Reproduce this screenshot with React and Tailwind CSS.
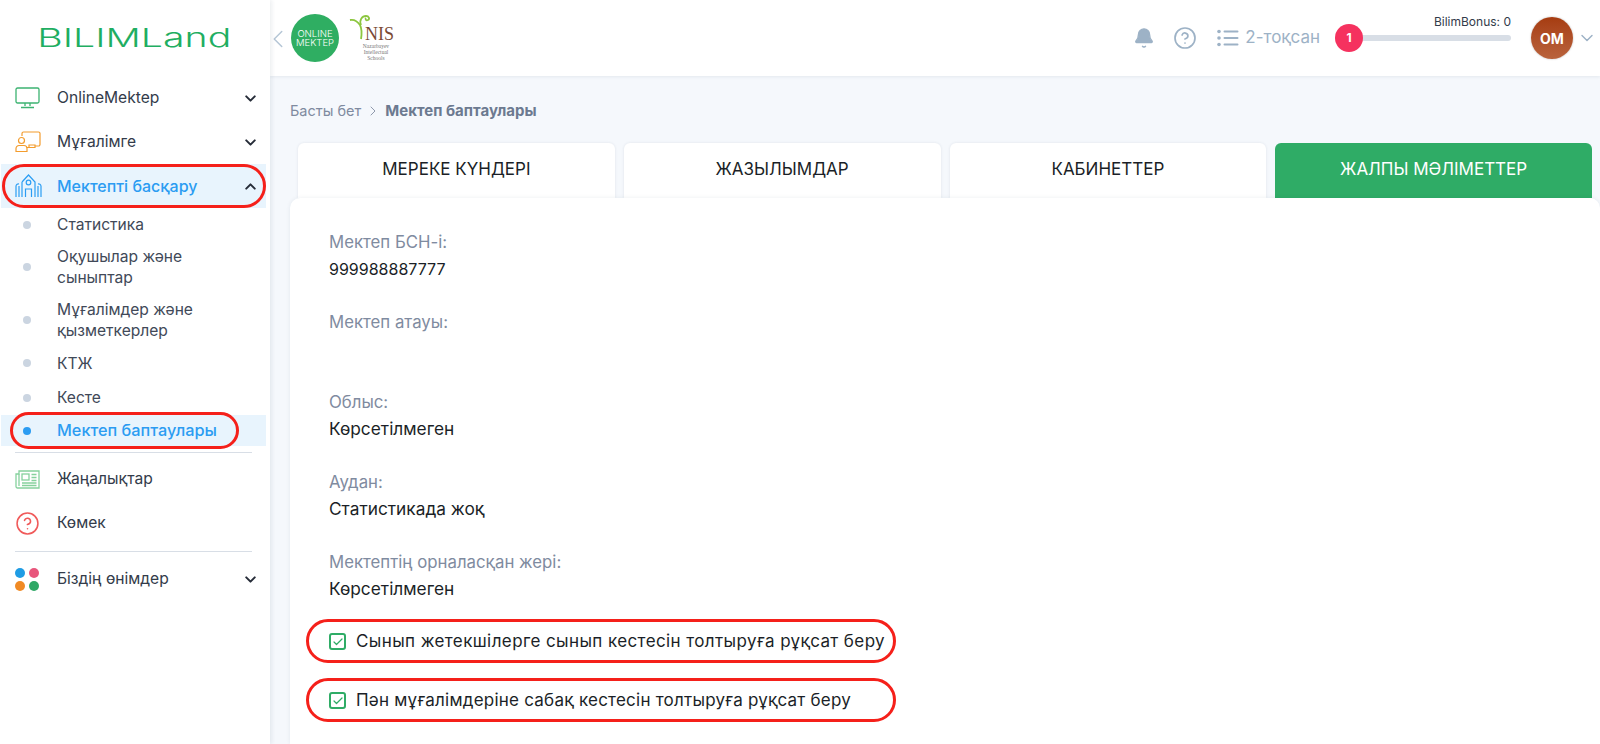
import React from "react";
import { ChevronDown, ChevronUp, ChevronLeft, ChevronRight, Bell, CircleHelp, Check } from "lucide-react";

const FONT = "font-['Inter','Liberation_Sans',Arial,sans-serif]";

function MonitorIcon() {
  return (
    <svg width="25" height="22" viewBox="0 0 25 22" fill="none" stroke="#3cb371" strokeWidth="1.300">
      <rect x="1" y="1" width="23" height="15" rx="1.500" />
      <path d="M10 16v3M15 16v3M6 20.500h13" />
    </svg>
  );
}

function TeacherIcon() {
  return (
    <svg width="26" height="22" viewBox="0 0 26 22" fill="none" stroke="#f39c2d" strokeWidth="1.200">
      <path d="M7 5V2.500A1.500 1.500 0 0 1 8.500 1h15A1.500 1.500 0 0 1 25 2.500v11a1.500 1.500 0 0 1-1.500 1.500H20" />
      <circle cx="6.500" cy="9.500" r="3" />
      <path d="M1 20.500v-3a3 3 0 0 1 3-3h5a3 3 0 0 1 3 3v3zM12 16.500h8V14h-6v2" />
    </svg>
  );
}

function SchoolIcon() {
  return (
    <svg width="27" height="24" viewBox="0 0 27 24" fill="none" stroke="#2a9df4" strokeWidth="1.200">
      <path d="M7 8l6.500-7L20 8v15M7 8v15M10.500 23v-8h6v8" />
      <circle cx="13.500" cy="8.500" r="2.300" />
      <path d="M1 23V12a2.500 2.500 0 0 1 3-2M4 23V12M26 23V12a2.500 2.500 0 0 0-3-2M23 23V12" />
    </svg>
  );
}

function NewsIcon() {
  return (
    <svg width="25" height="19" viewBox="0 0 25 19" fill="none" stroke="#86d19d" strokeWidth="1.300">
      <path d="M4 1h20v17H2.500A1.500 1.500 0 0 1 1 16.500V4h3z" />
      <path d="M4 4v12" />
      <rect x="7" y="4" width="7" height="6" />
      <path d="M16.500 4.500h5M16.500 7.500h5M16.500 10.500h5M7 13h14.500M7 15.500h14.500" />
    </svg>
  );
}

function ProductsIcon() {
  return (
    <div className="grid grid-cols-2 gap-x-[3px] gap-y-[3px] w-[24px]">
      <span className="w-[10px] h-[10px] rounded-full bg-[#1f9ce4]" />
      <span className="w-[10px] h-[10px] rounded-full bg-[#e8567c]" />
      <span className="w-[10px] h-[10px] rounded-full bg-[#f08a24]" />
      <span className="w-[10px] h-[10px] rounded-full bg-[#2fa866]" />
    </div>
  );
}

function QuarterIcon() {
  return (
    <svg width="22" height="18" viewBox="0 0 22 18" fill="#9db2c6">
      <circle cx="2" cy="2.500" r="1.800" />
      <circle cx="2" cy="9" r="1.800" />
      <circle cx="2" cy="15.500" r="1.800" />
      <rect x="6.500" y="1.500" width="15" height="2" rx="1" />
      <rect x="6.500" y="8" width="15" height="2" rx="1" />
      <rect x="6.500" y="14.500" width="15" height="2" rx="1" />
    </svg>
  );
}

function MenuItem({ icon, label, arrow, active }) {
  return (
    <div className={`flex items-center h-[44px] pl-[14px] pr-[7px] ${active ? "bg-[#e8f4fd] text-[#2b9cf2]" : "text-[#333b4a]"}`}>
      <div className="w-[42px] flex items-center">{icon}</div>
      <span className={`flex-1 ${active ? "text-[16px] font-medium" : "text-[15.600px]"}`}>{label}</span>
      {arrow === "down" && <ChevronDown size={17} strokeWidth={2.800} className="text-[#262c38]" />}
      {arrow === "up" && <ChevronUp size={17} strokeWidth={2.800} className="text-[#262c38]" />}
    </div>
  );
}

function SubItem({ children, active, className = "" }) {
  return (
    <div className={`flex items-center pl-[22px] ${active ? "bg-[#e8f4fd] text-[#2b9cf2]" : "text-[#414958]"} ${className}`}>
      <span className={`w-[8px] h-[8px] rounded-full mr-[26px] shrink-0 ${active ? "bg-[#2b9cf2]" : "bg-[#cbd5e1]"}`} />
      <span className={`leading-[21px] ${active ? "text-[16.300px] font-medium" : "text-[15.600px]"}`}>{children}</span>
    </div>
  );
}

function Oval({ className }) {
  return <div className={`absolute border-[3px] border-[#f5201a] rounded-full pointer-events-none ${className}`} />;
}

function Sidebar() {
  return (
    <aside className="w-[270px] shrink-0 bg-white h-full shadow-[2px_0_4px_rgba(30,50,80,0.08)] z-10">
      <div className="h-[76px] flex items-center justify-center pr-[2px]">
        <span className="text-[26px] font-light text-[#1fae62] scale-x-[1.510] leading-none">BILIMLand</span>
      </div>
      <div className="pl-[1px] pr-[4px]">
        <MenuItem icon={<MonitorIcon />} label="OnlineMektep" arrow="down" />
        <MenuItem icon={<TeacherIcon />} label="Мұғалімге" arrow="down" />
        <div className="relative">
          <MenuItem icon={<SchoolIcon />} label="Мектепті басқару" arrow="up" active />
          <Oval className="left-[1px] right-0 top-0 bottom-0" />
        </div>
        <div className="h-[1px]" />
        <SubItem className="h-[31px]">Статистика</SubItem>
        <SubItem className="h-[53px]">Оқушылар және<br />сыныптар</SubItem>
        <SubItem className="h-[53px]">Мұғалімдер және<br />қызметкерлер</SubItem>
        <SubItem className="h-[34px]">КТЖ</SubItem>
        <SubItem className="h-[35px]">Кесте</SubItem>
        <div className="relative">
          <SubItem active className="h-[31px]">Мектеп баптаулары</SubItem>
          <Oval className="left-[9px] w-[229px] -top-[3px] -bottom-[3px]" />
        </div>
        <div className="h-[1px] bg-[#d8dee6] mx-[14px] mt-[6px]" />
        <div className="mt-[4px]">
          <MenuItem icon={<NewsIcon />} label="Жаңалықтар" />
          <MenuItem icon={<CircleHelp size={25} strokeWidth={1.500} className="text-[#f05a5a]" />} label="Көмек" />
        </div>
        <div className="h-[1px] bg-[#d8dee6] mx-[14px] mt-[6px] mb-[5px]" />
        <MenuItem icon={<ProductsIcon />} label="Біздің өнімдер" arrow="down" />
      </div>
    </aside>
  );
}

function Logos() {
  return (
    <div className="flex items-center">
      <div className="w-[48px] h-[48px] rounded-full bg-[#2fae62] text-white flex items-center justify-center text-center text-[9.500px] font-light leading-[9px] z-10">
        ONLINE<br />MEKTEP
      </div>
      <div className="relative ml-[10px] w-[46px] h-[50px] font-['Liberation_Serif',serif] text-[#7a4a35]">
        <svg width="26" height="28" viewBox="0 0 26 28" fill="none" stroke="#8cc63f" strokeWidth="1.800" className="absolute left-0 top-0">
          <path d="M1 7c5-1 8 2 10 5 2 4 2 8 1 14" />
          <path d="M12 12c-2-5 1-9 5-9 3 0 4 3 2 4s-3-1-2-2" />
        </svg>
        <span className="absolute left-[16px] top-[12px] text-[18px] leading-none">NIS</span>
        <span className="absolute left-[9px] top-[30px] w-[36px] text-center text-[5.500px] leading-[6px] text-[#777]">Nazarbayev Intellectual Schools</span>
      </div>
    </div>
  );
}

function Header() {
  return (
    <header className="h-[76px] bg-white shadow-[0_1px_3px_rgba(30,50,80,0.08)] flex items-center shrink-0 relative">
      <div className="absolute -left-[8px] top-[14px] w-[50px] h-[50px] rounded-full bg-white flex items-center pl-[1px]">
        <ChevronLeft size={30} strokeWidth={1.200} className="text-[#b5c6d6]" />
      </div>
      <div className="ml-[21px] relative"><Logos /></div>
      <div className="ml-auto flex items-center text-[#9db2c6]">
        <Bell size={22} fill="#9db2c6" strokeWidth={1.500} />
        <CircleHelp size={24} strokeWidth={1.700} className="ml-[18px]" />
        <span className="ml-[20px]"><QuarterIcon /></span>
        <span className="ml-[6px] text-[17px]">2-тоқсан</span>
        <div className="relative w-[176px] h-[28px] ml-[15px] flex items-center">
          <div className="absolute left-[14px] right-0 top-[11px] h-[6px] rounded-full bg-[#d8dee6]" />
          <div className="relative w-[28px] h-[28px] rounded-full bg-[#f5325f] text-white text-[12px] font-bold flex items-center justify-center">1</div>
          <span className="absolute right-0 -top-[9px] text-[12px] leading-[14px] text-[#333b4a] whitespace-nowrap">BilimBonus: 0</span>
        </div>
        <div className="ml-[20px] w-[42px] h-[42px] rounded-full bg-gradient-to-b from-[#a63c10] to-[#b9633c] text-white text-[14px] font-bold flex items-center justify-center shadow-[0_0_2px_rgba(0,0,0,0.3)]">OM</div>
        <ChevronDown size={20} strokeWidth={1.700} className="ml-[4px] mr-[3px]" />
      </div>
    </header>
  );
}

function Tab({ children, active }) {
  return (
    <div className={`flex-1 h-[55px] rounded-t-[6px] flex items-center justify-center pb-[2px] text-[17px] ${active ? "bg-[#2fac66] text-white" : "bg-white text-[#1b1f27] shadow-[0_0_3px_rgba(30,50,80,0.1)]"}`}>
      {children}
    </div>
  );
}

function Field({ label, value, digits }) {
  return (
    <div className="h-[80px]">
      <div className="text-[16.800px] leading-[22px] text-[#7f8ba0]">{label}</div>
      <div className={`leading-[26px] mt-[3px] text-[#1b1f27] ${digits ? "text-[16px]" : "text-[17.300px]"}`}>{value}</div>
    </div>
  );
}

function Permission({ label, textClass }) {
  return (
    <div className="relative h-[59px] flex items-center pl-[39px]">
      <span className="w-[17px] h-[17px] rounded-[3px] border-[2px] border-[#2fac66] flex items-center justify-center mr-[10px]">
        <Check size={12} strokeWidth={2.400} className="text-[#2fac66]" />
      </span>
      <span className={`text-[17px] text-[#1b1f27] whitespace-nowrap ${textClass}`}>{label}</span>
      <Oval className="left-[16px] w-[590px] top-[7px] bottom-[8px]" />
    </div>
  );
}

export default function App() {
  return (
    <div className={`${FONT} flex w-[1600px] h-[744px] overflow-hidden bg-[#f5f8fc]`}>
      <Sidebar />
      <div className="flex-1 flex flex-col min-w-0">
        <Header />
        <div className="flex items-center h-[67px] pt-[3px] pl-[20px] text-[14.500px] text-[#7f8ba0] shrink-0">
          Басты бет
          <ChevronRight size={16} strokeWidth={1.300} className="mx-[4px]" />
          <span className="font-bold text-[15px] text-[#6c7a90]">Мектеп баптаулары</span>
        </div>
        <div className="flex gap-[9px] pl-[28px] pr-[8px] shrink-0">
          <Tab>МЕРЕКЕ КҮНДЕРІ</Tab>
          <Tab>ЖАЗЫЛЫМДАР</Tab>
          <Tab>КАБИНЕТТЕР</Tab>
          <Tab active>ЖАЛПЫ МӘЛІМЕТТЕР</Tab>
        </div>
        <main className="flex-1 ml-[20px] bg-white rounded-t-[10px] shadow-[0_0_4px_rgba(30,50,80,0.08)] relative">
          <div className="pl-[39px] pt-[33px]">
            <Field label="Мектеп БСН-і:" value="999988887777" digits />
            <Field label="Мектеп атауы:" value="" />
            <Field label="Облыс:" value="Көрсетілмеген" />
            <Field label="Аудан:" value="Статистикада жоқ" />
            <Field label="Мектептің орналасқан жері:" value="Көрсетілмеген" />
          </div>
          <div className="-mt-[19px]">
            <Permission label="Сынып жетекшілерге сынып кестесін толтыруға рұқсат беру" textClass="tracking-[0.400px]" />
            <Permission label="Пән мұғалімдеріне сабақ кестесін толтыруға рұқсат беру" textClass="tracking-[0.230px]" />
          </div>
        </main>
      </div>
    </div>
  );
}
